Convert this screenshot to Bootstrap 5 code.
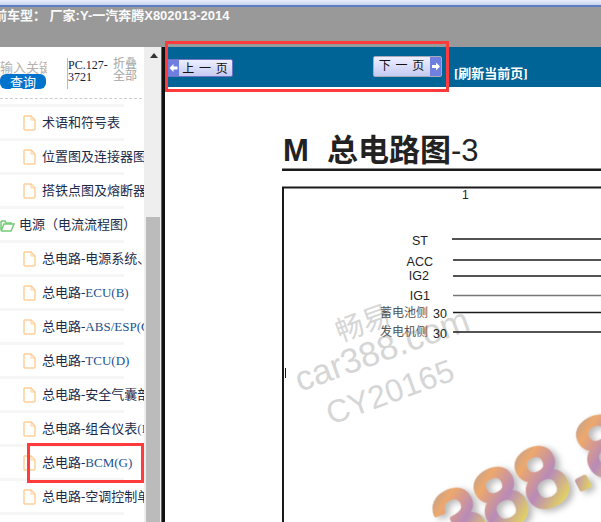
<!DOCTYPE html>
<html lang="zh-CN">
<head>
    <meta charset="UTF-8">
    <meta name="viewport" content="width=device-width, initial-scale=1">
    <title>总电路图</title>
    <link rel="stylesheet" href="https://cdn.jsdelivr.net/npm/bootstrap@5.3.0/dist/css/bootstrap.min.css">
    <style>
        html, body { height: 100%; overflow: hidden; }
        body { position: relative; font-family: "Liberation Serif", "Noto Sans CJK SC", serif; background: #fff; }
        .top-strip { height: 7px; background: linear-gradient(#e9eefa 0, #c6d4ef 70%, #5d7dc6 71%, #5d7dc6 100%); }
        .car-bar { height: 40px; background: #999; color: #fafafa; font: 700 13px/18px "Liberation Sans", "Noto Sans CJK SC", sans-serif; white-space: nowrap; overflow: hidden; }
        .car-bar span { margin-left: -6px; display: block; }
        .shell { height: 475px; }
        .side { width: 144px; overflow: hidden; flex: none; }
        .search { height: 52px; border-bottom: 1px dashed #ccc; margin-right: 2px; }
        .search-left { width: 47px; overflow: hidden; padding-top: 12px; flex: none; }
        .ph { color: #b5b0ab; font: 13px/15px "Noto Sans CJK SC", sans-serif; white-space: nowrap; height: 15px; }
        .btn.query { display: block; width: 46px; height: 15px; padding: 0; border: 0; border-radius: 6px; background: #0073cc; color: #fff; font: 13px/15px "Noto Sans CJK SC", sans-serif; }
        .pc { width: 46px; margin: 11px 0 0 20px; height: 31px; border-left: 1px solid #bbb; font-size: 12px; line-height: 12px; color: #14203a; padding-top: 1px; flex: none; }
        .fold { margin: 10px 0 0 0; width: 24px; color: #a5a5a5; font: 12px/12px "Noto Sans CJK SC", sans-serif; flex: none; }
        .tree { margin-top: 5px; }
        .tree-row { display: block; padding: 0; background: transparent; border: 0; height: 34px; color: #1c2b4a; font-size: 13px; white-space: nowrap; }
        .tree-row::before { content: ""; display: block; width: 124px; height: 3px; background: #f6f6f6; }
        .tree-row .inner { height: 31px; padding-left: 23px; gap: 6px; }
        .tree-row.folder .inner { padding-left: 0; gap: 4px; }
        .tree-row svg { flex: none; }
        .tree-row b { font-weight: 400; color: #20518e; }
        .scroll { width: 17px; flex: none; background: #eee; padding: 0 1px 0 2px; }
        .scroll-up { height: 170px; padding-top: 6px; }
        .scroll-up i { display: block; width: 0; border: 4px solid transparent; border-top: 0; border-bottom: 5px solid #333; margin-left: 4px; }
        .thumb { height: 305px; background: #bbb; }
        .split { width: 4px; flex: none; background: #111; border-left: 1px solid #666; }
        .page-nav { height: 40px; background: #006496; padding-left: 2px; }
        .pager { height: 18px; padding: 0; border: 1px solid #6d74c2; border-radius: 2px; background: linear-gradient(#eef0ff, #c5caf2); color: #111; font: 12px/16px "Noto Sans CJK SC", sans-serif; overflow: hidden; flex: none; }
        .pager svg { flex: none; }
        .pager.prev { width: 66px; margin-top: 12px; }
        .pager.next { width: 69px; height: 21px; margin: 9px 0 0 140px; border-color: #aab; }
        .pager .lbl { flex: 1; text-align: center; letter-spacing: 1px; }
        .refresh { color: #fff; font-weight: 700; font-size: 13px; margin: 17px 0 0 12px; white-space: nowrap; }
        .red-box { position: absolute; border: 3px solid #ff3b3b; pointer-events: none; }
        .red-nav { left: 165px; top: 41px; width: 284px; height: 51px; }
        .red-bcm { left: 27px; top: 443px; width: 117px; height: 40px; }
        .sheet { display: block; }
        .sheet text { font-family: "Liberation Sans", "Noto Sans CJK SC", sans-serif; }
    </style>
</head>
<body>
    <div class="top-strip"></div>
    <div class="car-bar"><span>前车型： 厂家:Y-一汽奔腾X802013-2014</span></div>

    <div class="shell d-flex">
        <!-- left tree -->
        <div class="side">
            <div class="search d-flex">
                <div class="search-left">
                    <div class="ph">输入关键</div>
                    <button class="btn query">查询</button>
                </div>
                <div class="pc">PC.127-3721</div>
                <div class="fold">折叠全部</div>
            </div>
            <ul class="list-group list-group-flush tree" id="tree"></ul>
        </div>
        <div class="scroll">
            <div class="scroll-up"><i></i></div>
            <div class="thumb"></div>
        </div>
        <div class="split"></div>

        <!-- right page -->
        <div class="flex-grow-1 overflow-hidden">
            <div class="page-nav d-flex align-items-start">
                <button class="btn pager prev d-flex">
                    <svg width="11" height="16" viewBox="0 0 11 16"><rect width="11" height="16" fill="#6f7fe0"/><path d="M1.500 8l4-4v2.500h4v3h-4V12z" fill="#fff"/></svg>
                    <span class="lbl">上 一 页</span>
                </button>
                <button class="btn pager next d-flex">
                    <span class="lbl">下 一 页</span>
                    <svg width="11" height="19" viewBox="0 0 11 19"><rect width="11" height="19" fill="#6f7fe0"/><path d="M10 9.500l-4-4V8H2v3h4v2.500z" fill="#fff"/></svg>
                </button>
                <span class="refresh">[刷新当前页]</span>
            </div>
            <svg class="sheet" width="436" height="435" viewBox="165 87 436 435">
                <defs>
                    <linearGradient id="ringFill" x1="0" y1="0" x2="0.300" y2="1">
                        <stop offset="0" stop-color="#8f9bb5"/>
                        <stop offset=".35" stop-color="#eda86c"/>
                        <stop offset=".65" stop-color="#b88ab8"/>
                        <stop offset="1" stop-color="#e8dc55"/>
                    </linearGradient>
                    <filter id="soft" x="-20%" y="-20%" width="150%" height="150%">
                        <feDropShadow dx="3" dy="4" stdDeviation="3" flood-color="#888" flood-opacity=".6"/>
                    </filter>
                </defs>

                <!-- watermark -->
                <g fill="#d6d6d6">
                    <text font-size="28" transform="translate(340 342) rotate(-20)">畅易</text>
                    <text font-size="35" transform="translate(300 392) rotate(-20)">car388.com</text>
                    <text font-size="32" transform="translate(331 425) rotate(-20)">CY20165</text>
                </g>
                <g font-size="83" fill="url(#ringFill)" stroke="url(#ringFill)" stroke-width="5" stroke-linejoin="round" filter="url(#soft)" transform="translate(452 555) rotate(-27)">
                    <text x="0" y="0">3</text>
                    <text x="46" y="0">8</text>
                    <text x="92" y="0">8</text>
                    <text x="138" y="0">.</text>
                    <text x="161" y="0">8</text>
                </g>

                <text x="283" y="161" font-size="31" font-weight="700" fill="#222">M</text>
                <text x="327" y="161" font-size="31" font-weight="700" fill="#222">总电路图<tspan font-weight="400">-3</tspan></text>
                <rect x="282" y="168.500" width="319" height="2.500" fill="#1a1a1a"/>
                <path d="M601 187.500H283V522" fill="none" stroke="#1a1a1a" stroke-width="2"/>
                <text x="462" y="199" font-size="12" fill="#222">1</text>

                <g font-size="12.500" fill="#222" text-anchor="end">
                    <text x="428" y="245">ST</text>
                    <text x="433" y="266">ACC</text>
                    <text x="429" y="280">IG2</text>
                    <text x="430" y="300">IG1</text>
                    <text x="447" y="318">30</text>
                    <text x="447" y="338">30</text>
                </g>
                <g font-size="12" fill="#555" text-anchor="end">
                    <text x="428" y="317">蓄电池侧</text>
                    <text x="428" y="336">发电机侧</text>
                </g>
                <g stroke="#1a1a1a" stroke-width="1.500">
                    <path d="M452 239H601"/>
                    <path d="M453 260H601"/>
                    <path d="M453 276H601"/>
                    <path d="M453 295.500H601" stroke="#777"/>
                    <path d="M453 312.500H601"/>
                    <path d="M453 332H601"/>
                    <path d="M285.500 368V378" stroke-width="1"/>
                </g>
            </svg>
        </div>
    </div>

    <div class="red-box red-nav"></div>
    <div class="red-box red-bcm"></div>

    <script>
        // tree rows: [label, latin tail, is folder]
        const rows = [
            ["术语和符号表", "", 0],
            ["位置图及连接器图", "", 0],
            ["搭铁点图及熔断器", "", 0],
            ["电源（电流流程图）", "", 1],
            ["总电路-电源系统、", "", 0],
            ["总电路-", "ECU(B)", 0],
            ["总电路-", "ABS/ESP(C)", 0],
            ["总电路-", "TCU(D)", 0],
            ["总电路-安全气囊部", "", 0],
            ["总电路-组合仪表", "(F)", 0],
            ["总电路-", "BCM(G)", 0],
            ["总电路-空调控制单", "", 0],
            ["", "", 0]
        ];
        const fileIcon = '<svg width="13" height="16" viewBox="0 0 13 16"><path d="M1.500 1h6.500l4 4v9a1 1 0 0 1-1 1H2a1 1 0 0 1-1-1V1.500z" fill="#fff" stroke="#fdd09a" stroke-width="1.500"/><path d="M8 1v4h4" fill="none" stroke="#fdd09a"/></svg>';
        const folderIcon = '<svg width="15" height="14" viewBox="0 0 15 14"><path d="M1 3h4l1 2h5v2" fill="#e8f8e8" stroke="#74cc74" stroke-width="1.500"/><path d="M1 3v9a1 1 0 0 0 1 1h9l3-7H4l-3 7" fill="#fff" stroke="#74cc74" stroke-width="1.500"/></svg>';
        document.getElementById("tree").innerHTML = rows.map(r => {
            if (!r[0]) return '<li class="list-group-item tree-row"></li>';
            return '<li class="list-group-item tree-row' + (r[2] ? ' folder' : '') + '"><div class="inner d-flex align-items-center">' +
                (r[2] ? folderIcon : fileIcon) + '<span>' + r[0] + '<b>' + r[1] + '</b></span></div></li>';
        }).join("");
    </script>
    <script src="https://cdn.jsdelivr.net/npm/bootstrap@5.3.0/dist/js/bootstrap.bundle.min.js"></script>
</body>
</html>
